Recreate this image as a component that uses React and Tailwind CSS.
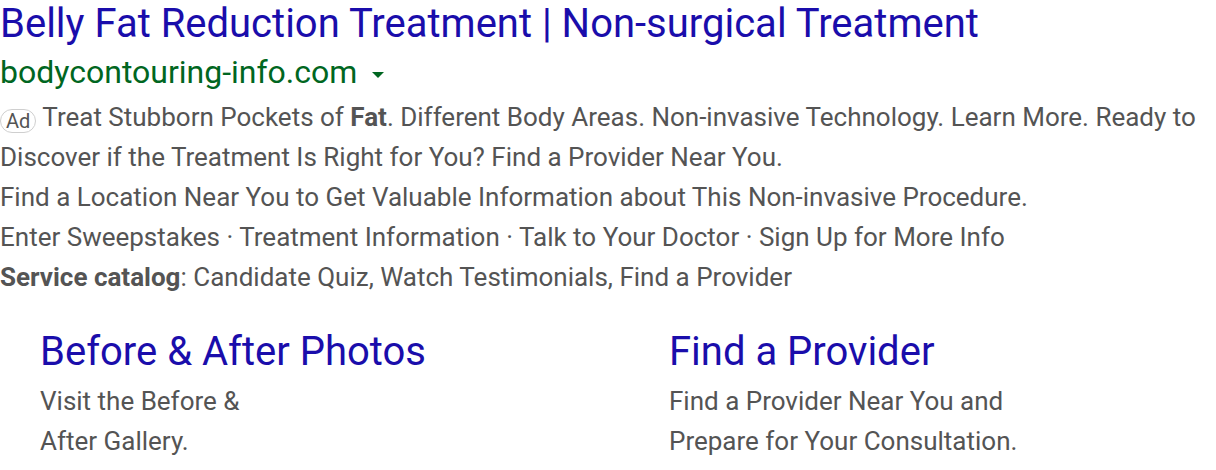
export default function App() {
  const font = { fontFamily: "Roboto, 'Liberation Sans', Arial, sans-serif" };
  return (
    <div className="w-[1216px] h-[470px] bg-white overflow-hidden" style={font}>
      <div className="text-[40px] leading-[48px] text-[#1a0dab] whitespace-nowrap">
        Belly Fat Reduction Treatment | Non-surgical Treatment
      </div>
      <div className="flex items-center text-[32px] leading-[49px] text-[#006621]">
        <span>bodycontouring-info.com</span>
        <span className="ml-[15px] mt-[4px] w-0 h-0 border-l-[6px] border-r-[6px] border-t-[6px] border-l-transparent border-r-transparent border-t-[#006621]"></span>
      </div>
      <div className="text-[26px] leading-[40px] text-[#545454]">
        <div>
          <span className="inline-flex items-center justify-center h-[24px] px-[5px] mr-[6px] border border-[#cfcfcf] rounded-[12px] text-[20px] leading-[20px] text-[#545454] align-[-2px]">Ad</span>
          Treat Stubborn Pockets of <b className="font-bold">Fat</b>. Different Body Areas. Non-invasive Technology. Learn More. Ready to Discover if the Treatment Is Right for You? Find a Provider Near You.
        </div>
        <div>Find a Location Near You to Get Valuable Information about This Non-invasive Procedure.</div>
        <div>Enter Sweepstakes · Treatment Information · Talk to Your Doctor · Sign Up for More Info</div>
        <div><b className="font-bold">Service catalog</b>: Candidate Quiz, Watch Testimonials, Find a Provider</div>
      </div>
      <div className="flex mt-[31px] pl-[40px]">
        <div className="w-[629px]">
          <div className="text-[40px] leading-[48px] text-[#1a0dab]">Before &amp; After Photos</div>
          <div className="mt-[5px] text-[26px] leading-[40px] text-[#545454]">
            <div>Visit the Before &amp;</div>
            <div>After Gallery.</div>
          </div>
        </div>
        <div>
          <div className="text-[40px] leading-[48px] text-[#1a0dab]">Find a Provider</div>
          <div className="mt-[5px] text-[26px] leading-[40px] text-[#545454]">
            <div>Find a Provider Near You and</div>
            <div>Prepare for Your Consultation.</div>
          </div>
        </div>
      </div>
    </div>
  );
}
